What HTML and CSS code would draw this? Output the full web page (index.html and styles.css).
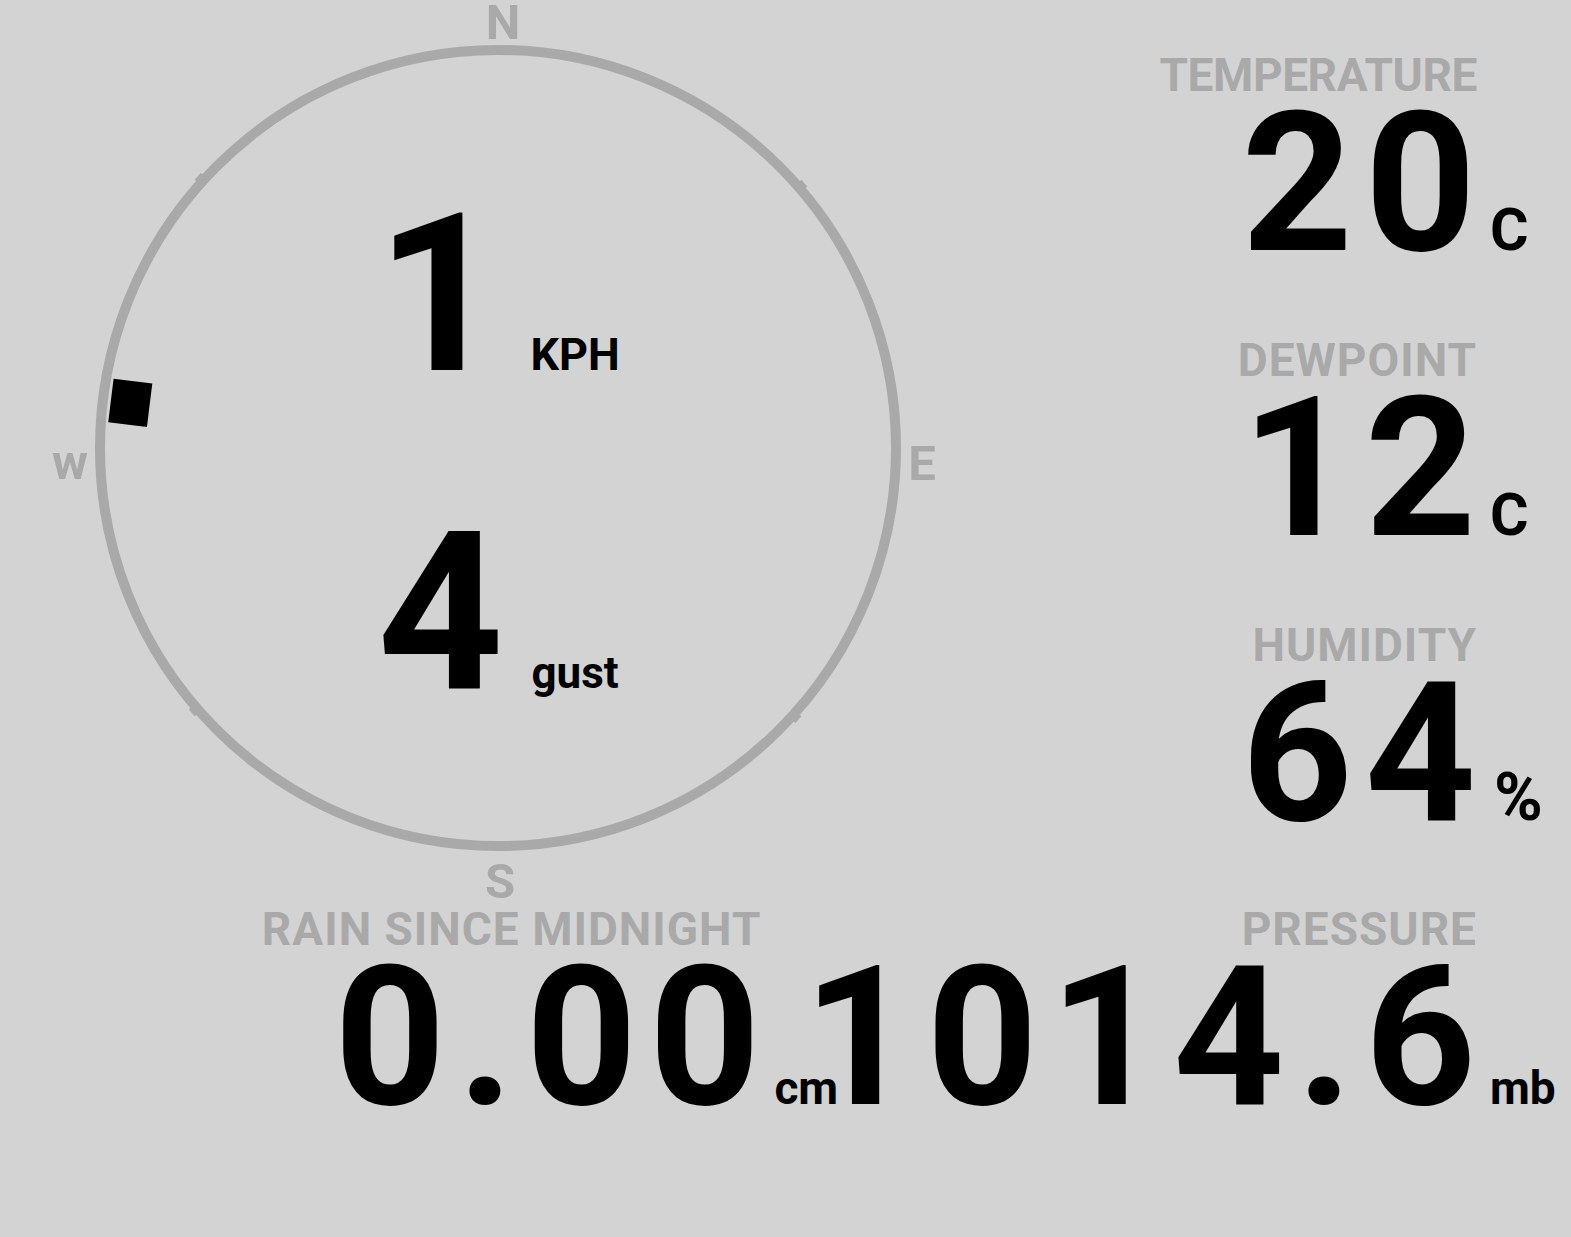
FILE: index.html
```html
<!DOCTYPE html>
<html lang="en">
  <head>
    <meta charset="UTF-8" />
    <meta name="viewport" content="width=device-width, initial-scale=1.0" />
    <title>Weather Station</title>
    <link rel="stylesheet" href="styles.css">
  </head>
  <body>
    <main class="station">
      <section class="top">
        <!-- wind: compass ring, direction marker and speeds -->
        <div class="compass">
          <svg width="996" height="906" viewBox="0 0 996 906">
            <circle class="ring" cx="498" cy="448" r="398" />
            <g class="notches" transform="translate(498 448)">
              <rect x="0" y="-405" width="9" height="10" transform="rotate(48.5)" />
              <rect x="0" y="-405" width="9" height="10" transform="rotate(131.5)" />
              <rect x="0" y="-405" width="9" height="10" transform="rotate(228.5)" />
              <rect x="0" y="-405" width="9" height="10" transform="rotate(311.5)" />
            </g>
            <text class="point" x="503" y="39">N</text>
            <text class="point" x="922" y="480">E</text>
            <text class="point" x="500" y="898">S</text>
            <text class="point" x="70" y="479">w</text>
            <rect class="vane" x="-22" y="-390" width="44" height="39" transform="translate(498 448) rotate(-83)" />
          </svg>
          <div class="speeds">
            <div class="speed-row">
              <span class="speed-value">1</span>
              <span class="speed-unit">KPH</span>
            </div>
            <div class="speed-row">
              <span class="speed-value">4</span>
              <span class="speed-unit gust">gust</span>
            </div>
          </div>
        </div>

        <div class="readings">
          <div class="reading">
            <div class="label tight">TEMPERATURE</div>
            <div class="value">20</div>
            <div class="unit">C</div>
          </div>
          <div class="reading">
            <div class="label">DEWPOINT</div>
            <div class="value">12</div>
            <div class="unit">C</div>
          </div>
          <div class="reading">
            <div class="label">HUMIDITY</div>
            <div class="value">64</div>
            <div class="unit pct">%</div>
          </div>
        </div>
      </section>

      <section class="bottom">
        <div class="reading rain">
          <div class="label">RAIN SINCE MIDNIGHT</div>
          <div class="value">0.00</div>
          <div class="unit small">cm</div>
        </div>
        <div class="reading">
          <div class="label">PRESSURE</div>
          <div class="value">1014.6</div>
          <div class="unit small">mb</div>
        </div>
      </section>
    </main>
  </body>
</html>
```

FILE: styles.css
```css
body {
  margin: 0;
  background-color: #d3d3d3;
  color: #000;
  font-family: Roboto, "Liberation Sans", sans-serif;
  font-weight: 700;
}
.station {
  width: 1571px;
}
.top {
  display: flex;
  justify-content: space-between;
  height: 906px;
}

/* compass */
.compass {
  position: relative;
  width: 996px;
  height: 906px;
}
.compass svg {
  display: block;
  overflow: visible;
}
.ring {
  fill: none;
  stroke: #a9a9a9;
  stroke-width: 10;
}
.notches {
  fill: #a9a9a9;
}
.point {
  fill: #a9a9a9;
  font-family: Roboto, "Liberation Sans", sans-serif;
  font-weight: 700;
  font-size: 49px;
  text-anchor: middle;
}
.vane {
  fill: #000;
}
.speeds {
  position: absolute;
  top: 185px;
  left: 0;
  right: 0;
  display: flex;
  flex-direction: column;
  gap: 98px;
}
.speed-row {
  display: flex;
  justify-content: center;
  align-items: baseline;
  gap: 28px;
}
.speed-value {
  font-size: 220px;
  line-height: 220px;
}
.speed-unit {
  font-size: 45px;
  line-height: 45px;
}
.speed-unit.gust {
  font-size: 44px;
}

/* readings */
.readings {
  display: flex;
  flex-direction: column;
  align-items: flex-end;
  padding: 52px 11px 0 0;
}
.reading {
  display: grid;
  grid-template-columns: auto 70px;
  column-gap: 14px;
  margin-bottom: 68px;
}
.label {
  grid-column: 1;
  grid-row: 1;
  text-align: right;
  color: #a9a9a9;
  font-size: 46px;
  line-height: 46px;
  letter-spacing: 1px;
  margin-right: -1px;
}
.label.tight {
  letter-spacing: -0.4px;
}
.value {
  grid-column: 1;
  grid-row: 2;
  align-self: baseline;
  text-align: right;
  font-size: 194px;
  line-height: 171px;
  letter-spacing: 12px;
  margin-right: -12px;
}
.unit {
  grid-column: 2;
  grid-row: 2;
  align-self: baseline;
  font-size: 59px;
  line-height: 59px;
}
.unit.pct {
  font-size: 66px;
  padding-left: 4px;
}
.unit.small {
  font-size: 46px;
  line-height: 46px;
}

/* bottom row */
.bottom {
  display: flex;
  justify-content: flex-end;
  align-items: flex-end;
  padding-right: 11px;
}
.bottom .reading {
  margin-bottom: 0;
}
.reading.rain {
  grid-template-columns: auto auto;
  margin-right: -35px;
}
```
